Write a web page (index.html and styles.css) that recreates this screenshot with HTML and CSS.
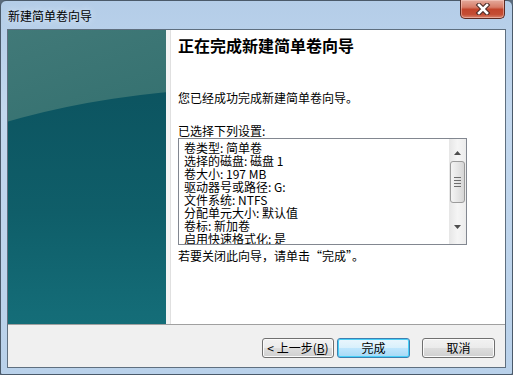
FILE: index.html
```html
<!DOCTYPE html>
<html lang="zh-CN">
<head>
    <meta charset="UTF-8">
    <title>新建简单卷向导</title>
    <link rel="stylesheet" href="styles.css">
</head>
<body>
    <div class="window">
        <div class="titlebar">
            <span class="title">新建简单卷向导</span>
            <button class="close" title="关闭">
                <svg width="16" height="12" viewBox="0 0 16 12">
                    <path d="M4 2 L12 10 M12 2 L4 10" stroke="#4a2a26" stroke-width="4.6" stroke-linecap="square"/>
                    <path d="M4 2 L12 10 M12 2 L4 10" stroke="#ffffff" stroke-width="2.6" stroke-linecap="square"/>
                </svg>
            </button>
        </div>
        <div class="client">
            <div class="main">
                <div class="side"></div>
                <div class="content">
                    <h1 class="heading">正在完成新建简单卷向导</h1>
                    <p class="intro">您已经成功完成新建简单卷向导。</p>
                    <p class="label">已选择下列设置:</p>
                    <div class="listbox">
                        <div class="list-text">
                            <div>卷类型: 简单卷</div>
                            <div>选择的磁盘: 磁盘 1</div>
                            <div>卷大小: 197 MB</div>
                            <div>驱动器号或路径: G:</div>
                            <div>文件系统: NTFS</div>
                            <div>分配单元大小: 默认值</div>
                            <div>卷标: 新加卷</div>
                            <div>启用快速格式化: 是</div>
                        </div>
                        <div class="scrollbar">
                            <div class="sb-btn up">
                                <svg width="7" height="4" viewBox="0 0 7 4"><path d="M0 4 L3.5 0 L7 4 Z" fill="#4d4d4d"/></svg>
                            </div>
                            <div class="sb-thumb">
                                <span></span><span></span><span></span><span></span>
                            </div>
                            <div class="sb-track"></div>
                            <div class="sb-btn">
                                <svg width="7" height="4" viewBox="0 0 7 4"><path d="M0 0 L7 0 L3.5 4 Z" fill="#4d4d4d"/></svg>
                            </div>
                        </div>
                    </div>
                    <p class="hint">若要关闭此向导，请单击“完成”。</p>
                </div>
            </div>
            <div class="footer">
                <button class="btn">&lt; 上一步(<u>B</u>)</button>
                <button class="btn default">完成</button>
                <button class="btn cancel">取消</button>
            </div>
        </div>
    </div>
</body>
</html>
```

FILE: styles.css
```css
* {
    margin: 0;
    padding: 0;
    box-sizing: border-box;
    font-family: "Noto Sans CJK SC", "Liberation Sans", sans-serif;
}

body {
    width: 513px;
    height: 375px;
    background: #5b6b7c;
    overflow: hidden;
}

.window {
    width: 513px;
    height: 375px;
    border: 1px solid #4b5a6a;
    border-radius: 6px 6px 2px 2px;
    padding: 0 6px 6px 6px;
    background: linear-gradient(to bottom, #b4cde8 0%, #c3d8ee 30%, #bfd5ec 60%, #b9d1ea 100%);
    display: flex;
    flex-direction: column;
}

/* title bar */
.titlebar {
    height: 28px;
    display: flex;
    align-items: flex-start;
}

.title {
    font-size: 12px;
    line-height: 16px;
    color: #000;
    margin: 7px 0 0 1px;
    text-shadow: 0 0 6px #e6f0fa;
}

.close {
    margin-left: auto;
    margin-right: 1px;
    width: 45px;
    height: 19px;
    margin-top: -1px;
    border: 1px solid #5d2a22;
    border-top: none;
    border-radius: 0 0 5px 5px;
    background: linear-gradient(to bottom, #e4aa9c 0%, #d77c68 40%, #c2452c 52%, #c44d33 80%, #d8836d 100%);
    box-shadow: inset 0 0 0 1px rgba(255, 220, 210, 0.45);
    display: flex;
    align-items: center;
    justify-content: center;
}

/* client area */
.client {
    height: 339px;
    border: 1px solid #5f6f7f;
    background: #f0f0f0;
    display: flex;
    flex-direction: column;
}

.main {
    height: 294px;
    display: flex;
    background: #fff;
}

.side {
    position: relative;
    width: 158px;
    overflow: hidden;
    background: linear-gradient(160deg, #417978 0%, #33706f 45%, #26646d 100%);
}

/* darker arc on the panel */
.side::before {
    content: '';
    position: absolute;
    left: -250px;
    top: 58px;
    width: 1000px;
    height: 500px;
    border-radius: 50%;
    background: linear-gradient(to bottom, #0c5460 0%, #0f5e69 25%, #146c77 45%, #16737f 60%);
}

.content {
    flex: 1;
    padding-left: 8px;
    border-left: 4px solid #f3f3f3;
    box-shadow: inset 1px 0 0 #e0e0e0;
    display: flex;
    flex-direction: column;
    align-items: flex-start;
}

.heading {
    font-size: 16px;
    line-height: 20px;
    font-weight: bold;
    color: #000;
    margin-top: 5px;
}

.intro {
    font-size: 12px;
    line-height: 16px;
    margin-top: 35px;
}

.label {
    font-size: 12px;
    line-height: 14px;
    margin-top: 18px;
}

.listbox {
    width: 289px;
    height: 107px;
    border: 1px solid #828790;
    background: #fff;
    display: flex;
}

.list-text {
    flex: 1;
    padding: 2px 0 0 5px;
    overflow: hidden;
    font-family: "Liberation Mono", "Noto Sans CJK SC", monospace;
    font-size: 12px;
    line-height: 13px;
    color: #000;
}

.scrollbar {
    width: 17px;
    background: linear-gradient(to right, #e6e6e6, #f5f5f5 50%, #ececec);
    display: flex;
    flex-direction: column;
    padding-bottom: 6px;
}

.sb-btn {
    height: 22px;
    display: flex;
    align-items: center;
    justify-content: center;
}

.sb-btn.up {
    padding-top: 6px;
}

.sb-thumb {
    height: 42px;
    margin: 0 1px;
    border: 1px solid #9b9b9b;
    border-radius: 3px;
    background: linear-gradient(to right, #f4f4f4, #e6e6e6 50%, #d6d6d6);
    display: flex;
    flex-direction: column;
    align-items: center;
    justify-content: center;
    gap: 2px;
}

.sb-thumb span {
    width: 7px;
    height: 1px;
    background: #6e6e6e;
}

.sb-track {
    flex: 1;
}

.hint {
    font-size: 12px;
    line-height: 16px;
    margin-top: 3px;
}

/* bottom button row */
.footer {
    flex: 1;
    border-top: 1px solid #a0a0a0;
    display: flex;
    justify-content: flex-end;
    align-items: flex-start;
    padding: 13px 10px 0 0;
}

.btn {
    width: 72px;
    height: 20px;
    font-size: 12px;
    line-height: 16px;
    color: #000;
    border: 1px solid #707070;
    border-radius: 3px;
    background: linear-gradient(to bottom, #f2f2f2 0%, #ebebeb 48%, #dddddd 52%, #cfcfcf 100%);
    box-shadow: inset 0 0 0 1px #fbfbfb;
}

.btn u {
    text-decoration: underline;
}

.btn.default {
    width: 73px;
    margin-left: 3px;
    border-color: #3c7fb1;
    background: linear-gradient(to bottom, #eaf6fd 0%, #d9f0fc 48%, #bee6fd 52%, #a7d9f5 100%);
    box-shadow: inset 0 0 0 1px #48d0f8;
}

.btn.cancel {
    width: 73px;
    margin-left: 12px;
}
```
